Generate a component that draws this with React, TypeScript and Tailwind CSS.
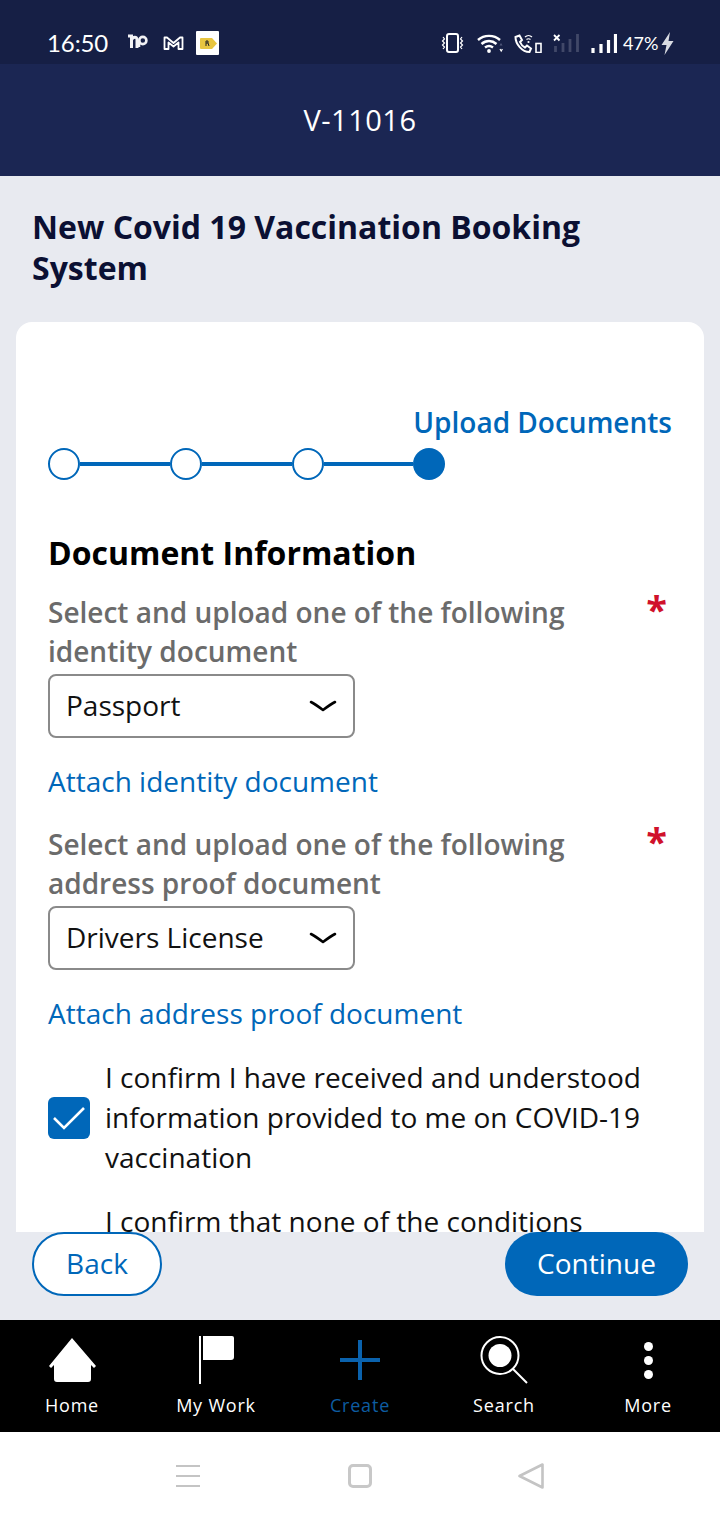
import React from 'react';

const font = { fontFamily: '"Open Sans", sans-serif' };

function Chevron() {
  return (
    <svg width="28" height="14" viewBox="0 0 28 14" fill="none" stroke="#000" strokeWidth="2.6" strokeLinecap="round" strokeLinejoin="round">
      <path d="M2 3 C6 5 10 8 14 11 C18 8 22 5 26 3" />
    </svg>
  );
}

function Select({ value }: { value: string }) {
  return (
    <div className="flex h-16 w-[307px] items-center justify-between rounded-lg border-2 border-[#8a8a8a] pl-[16px] pr-[16px] text-[28px] text-[#111]">
      <span className="pb-[2px]">{value}</span>
      <Chevron />
    </div>
  );
}

function Field({ line1, line2, value, link }: { line1: string; line2: string; value: string; link: string }) {
  return (
    <div>
      <div className="flex items-start justify-between pr-[5px]">
        <div className="text-[28px] leading-[39px] font-semibold text-[#6b6b6b]">
          {line1}
          <br />
          {line2}
        </div>
        <span className="mt-[-9px] text-[38px] leading-[50px] font-bold text-[#d0112b]">*</span>
      </div>
      <div className="mt-[3px]">
        <Select value={value} />
      </div>
      <div className="mt-[23px] text-[28px] leading-[40px] text-[#0067b9]">{link}</div>
    </div>
  );
}

function StepDot({ filled }: { filled?: boolean }) {
  return (
    <div className={filled ? 'size-8 shrink-0 rounded-full bg-[#0067b9]' : 'size-8 shrink-0 rounded-full border-2 border-[#0067b9] bg-white'} />
  );
}

function StatusBar() {
  return (
    <div className="flex h-16 items-end bg-[#161f45] pb-[4px] pl-[47px] pr-[46px] text-white">
      <div className="flex h-[34px] w-full items-center justify-between">
        <div className="flex items-center">
          <span className="w-[62px] text-[24px] tracking-[-0.1px]" style={{ fontFamily: 'Lato, sans-serif' }}>16:50</span>
          <svg className="ml-[19px]" width="20" height="18" viewBox="0 0 20 18" fill="none" stroke="#f2f2f5" strokeWidth="3">
            <path d="M0 2 H3.5 V14 M3.5 6 C5 2.5 9 2 9 6 V14" />
            <circle cx="14.8" cy="6.5" r="3.6" strokeWidth="2.6" />
            <path d="M11 6 V13" strokeWidth="2.6" />
          </svg>
          <svg className="ml-[15px]" width="21" height="14" viewBox="0 0 21 14" fill="none" stroke="#fff" strokeWidth="1.8" strokeLinejoin="round">
            <path d="M1.5 13 V1.5 H4 L10.5 7 L17 1.5 H19.5 V13 H15.5 V6.5 L10.5 10.5 L5.5 6.5 V13 Z" />
          </svg>
          <div className="ml-[12px] flex h-6 w-[23px] items-center justify-start rounded-[1px] bg-white pl-[4px]">
            <svg width="17" height="11" viewBox="0 0 17 11">
              <path d="M1 0 H12 L17 5.5 L12 11 H1 Q0 11 0 10 V1 Q0 0 1 0 Z" fill="#e8c540" />
              <path d="M6 3 V8 M6 3 H8 V5 H6 M8 5 L9 8" stroke="#222" strokeWidth="1" fill="none" />
            </svg>
          </div>
        </div>
        <div className="flex items-center">
          <svg width="23" height="20" viewBox="0 0 23 20" fill="none" stroke="#fff">
            <rect x="6" y="1" width="11" height="18" rx="2" strokeWidth="2" />
            <path d="M2 4 L3.5 6 L1.5 8 L3.5 10 L1.5 12 L3.5 14 L2 16 M21 4 L19.5 6 L21.5 8 L19.5 10 L21.5 12 L19.5 14 L21 16" strokeWidth="1.2" />
          </svg>
          <svg className="ml-[13px]" width="27" height="19" viewBox="0 0 27 19" fill="none" stroke="#fff" strokeWidth="2.4">
            <path d="M1 6 C7 0.5 17 0.5 23 6 M4.5 10 C9 6 15 6 19.5 10 M8 13.5 C10.5 11.5 13.5 11.5 16 13.5" />
            <circle cx="12" cy="17" r="1.9" fill="#fff" stroke="none" />
            <path d="M24 9 L22.5 11.5 H25.5 Z" fill="#50587a" stroke="none" />
            <path d="M23 15 L24.2 17 L25.4 15" strokeWidth="1.2" />
          </svg>
          <svg className="ml-[10px]" width="28" height="19" viewBox="0 0 28 19" fill="none" stroke="#fff" strokeWidth="2">
            <path d="M1.5 3 L5.5 1.5 L8 6 L6 8 C7 10.5 9 12.5 11 13.5 L13 11.5 L17 14.5 L15.5 18 C8 18 1.5 10 1.5 3 Z" />
            <path d="M11 3 C13 1 16 1 18 3 M12.5 5.5 C13.5 4.5 15.5 4.5 16.5 5.5" strokeWidth="1.2" />
            <circle cx="14.5" cy="8" r="1.1" fill="#fff" stroke="none" />
            <rect x="22" y="9.5" width="5" height="9" strokeWidth="1.6" />
          </svg>
          <svg className="ml-[11px]" width="26" height="18" viewBox="0 0 26 18" fill="none">
            <path d="M1 1 L6.5 6.5 M6.5 1 L1 6.5" stroke="#fff" strokeWidth="1.8" />
            <path d="M2.5 12 V18 M10 9 V18 M17 5 V18 M24.5 0 V18" stroke="#414868" strokeWidth="2.8" />
          </svg>
          <svg className="ml-[12px]" width="26" height="19" viewBox="0 0 26 19" fill="none" stroke="#fff" strokeWidth="3.2">
            <path d="M2 14 V19 M10 10 V19 M17.5 6 V19 M24.5 0 V19" />
          </svg>
          <span className="ml-[6px] w-[34px] text-[18px] leading-none" style={{ fontFamily: 'Lato, sans-serif' }}>47%</span>
          <svg className="ml-[4px]" width="13" height="23" viewBox="0 0 13 23">
            <path d="M9 0 L0.5 13 H5.5 L3.5 23 L12.5 9 H7.5 Z" fill="#d9dbe2" />
          </svg>
        </div>
      </div>
    </div>
  );
}

function NavItem({ label, active, children }: { label: string; active?: boolean; children: React.ReactNode }) {
  return (
    <div className={active ? 'flex flex-col items-center text-[#0d5ca0]' : 'flex flex-col items-center text-white'}>
      <div className="flex h-12 items-center justify-center">{children}</div>
      <span className="mt-[8px] leading-[27px]">{label}</span>
    </div>
  );
}

function BottomNav() {
  return (
    <div className="grid h-[112px] grid-cols-5 bg-black pt-[16px] text-[18px] tracking-[0.8px]">
      <NavItem label="Home">
        <svg width="50" height="44" viewBox="0 0 50 44" fill="#fff">
          <path d="M25 0 L49 28 L47 30 L44 27 V41 Q44 44 41 44 H10 Q7 44 7 41 V27 L4 30 L2 28 Z" />
        </svg>
      </NavItem>
      <NavItem label="My Work">
        <svg width="38" height="48" viewBox="0 0 38 48" fill="#fff">
          <rect x="2" y="0" width="2" height="48" />
          <path d="M6 0 H35 Q37 0 37 2 V21 Q37 24 34 24 H6 Z" />
        </svg>
      </NavItem>
      <NavItem label="Create" active>
        <svg width="40" height="40" viewBox="0 0 40 40" stroke="#0a62ad" strokeWidth="4">
          <path d="M20 0 V40 M0 20 H40" />
        </svg>
      </NavItem>
      <NavItem label="Search">
        <svg width="48" height="48" viewBox="0 0 48 48" fill="none" stroke="#fff">
          <circle cx="20" cy="19.5" r="18.5" strokeWidth="2" />
          <circle cx="20" cy="19.5" r="11.5" fill="#fff" stroke="none" />
          <path d="M33 33 L47 47" strokeWidth="2" />
        </svg>
      </NavItem>
      <NavItem label="More">
        <div className="flex flex-col items-center gap-[5px]">
          <div className="size-[9px] rounded-full bg-white" />
          <div className="size-[9px] rounded-full bg-white" />
          <div className="size-[9px] rounded-full bg-white" />
        </div>
      </NavItem>
    </div>
  );
}

function SystemNav() {
  return (
    <div className="flex h-[88px] items-start bg-white pt-[32px]">
      <div className="flex w-full justify-center">
        <div className="mt-[1px] mr-[148px] flex h-[22px] w-6 flex-col justify-between">
          <div className="h-[2px] bg-[#c4c4c4]" />
          <div className="h-[2px] bg-[#c4c4c4]" />
          <div className="h-[2px] bg-[#c4c4c4]" />
        </div>
        <div className="mr-[146px] h-6 w-6 rounded-[5px] border-[3px] border-[#c8c8c8]" />
        <svg width="26" height="26" viewBox="0 0 26 26" fill="none" stroke="#c4c4c4" strokeWidth="2.6" strokeLinejoin="round" className="-mt-[1px]">
          <path d="M24.5 1.5 V24.5 L1.5 13 Z" />
        </svg>
      </div>
    </div>
  );
}

export default function App() {
  return (
    <div className="flex h-[1520px] w-[720px] flex-col overflow-hidden bg-[#e8eaf0]" style={font}>
      <StatusBar />
      <div className="flex h-[112px] items-center justify-center bg-[#1b2653] text-[29px] tracking-[0.5px] text-white">V-11016</div>

      <h1 className="px-8 pt-[30px] text-[32px] leading-[41px] font-bold text-[#0b1033]">
        New Covid 19 Vaccination Booking System
      </h1>

      <div className="mx-4 mt-[34px] h-[910px] overflow-hidden rounded-t-2xl bg-white px-8 pt-[80px]">
        <div className="text-right text-[28px] leading-[40px] font-semibold text-[#0067b9]">Upload Documents</div>
        <div className="mt-[6px] flex items-center">
          <StepDot />
          <div className="h-1 w-[90px] bg-[#0067b9]" />
          <StepDot />
          <div className="h-1 w-[90px] bg-[#0067b9]" />
          <StepDot />
          <div className="h-1 w-[89px] bg-[#0067b9]" />
          <StepDot filled />
        </div>

        <h2 className="mt-[51px] text-[32px] leading-[44px] font-bold text-black">Document Information</h2>

        <div className="mt-[18px]">
          <Field line1="Select and upload one of the following" line2="identity document" value="Passport" link="Attach identity document" />
        </div>
        <div className="mt-[24px]">
          <Field line1="Select and upload one of the following" line2="address proof document" value="Drivers License" link="Attach address proof document" />
        </div>

        <div className="mt-[24px] flex items-center gap-[15px]">
          <div className="mt-[2px] flex size-[42px] shrink-0 items-center justify-center rounded-md bg-[#0067b9]">
            <svg width="32" height="24" viewBox="0 0 32 24" fill="none" stroke="#fff" strokeWidth="2.6">
              <path d="M1 12 L11 22 L31 2" />
            </svg>
          </div>
          <div className="text-[28px] leading-[40px] text-[#111]">
            I confirm I have received and understood information provided to me on COVID-19 vaccination
          </div>
        </div>
        <div className="mt-[24px] pl-[57px] text-[28px] leading-[40px] text-[#111]">
          I confirm that none of the conditions
        </div>
      </div>

      <div className="flex h-[88px] items-start justify-between bg-[#e8eaf0] px-8">
        <button className="flex h-16 w-[130px] items-center justify-center rounded-full border-2 border-[#0067b9] bg-white pb-[2px] text-[28px] text-[#0067b9]">Back</button>
        <button className="flex h-16 w-[183px] items-center justify-center rounded-full bg-[#0067b9] pb-[2px] text-[28px] text-white">Continue</button>
      </div>

      <BottomNav />
      <SystemNav />
    </div>
  );
}
